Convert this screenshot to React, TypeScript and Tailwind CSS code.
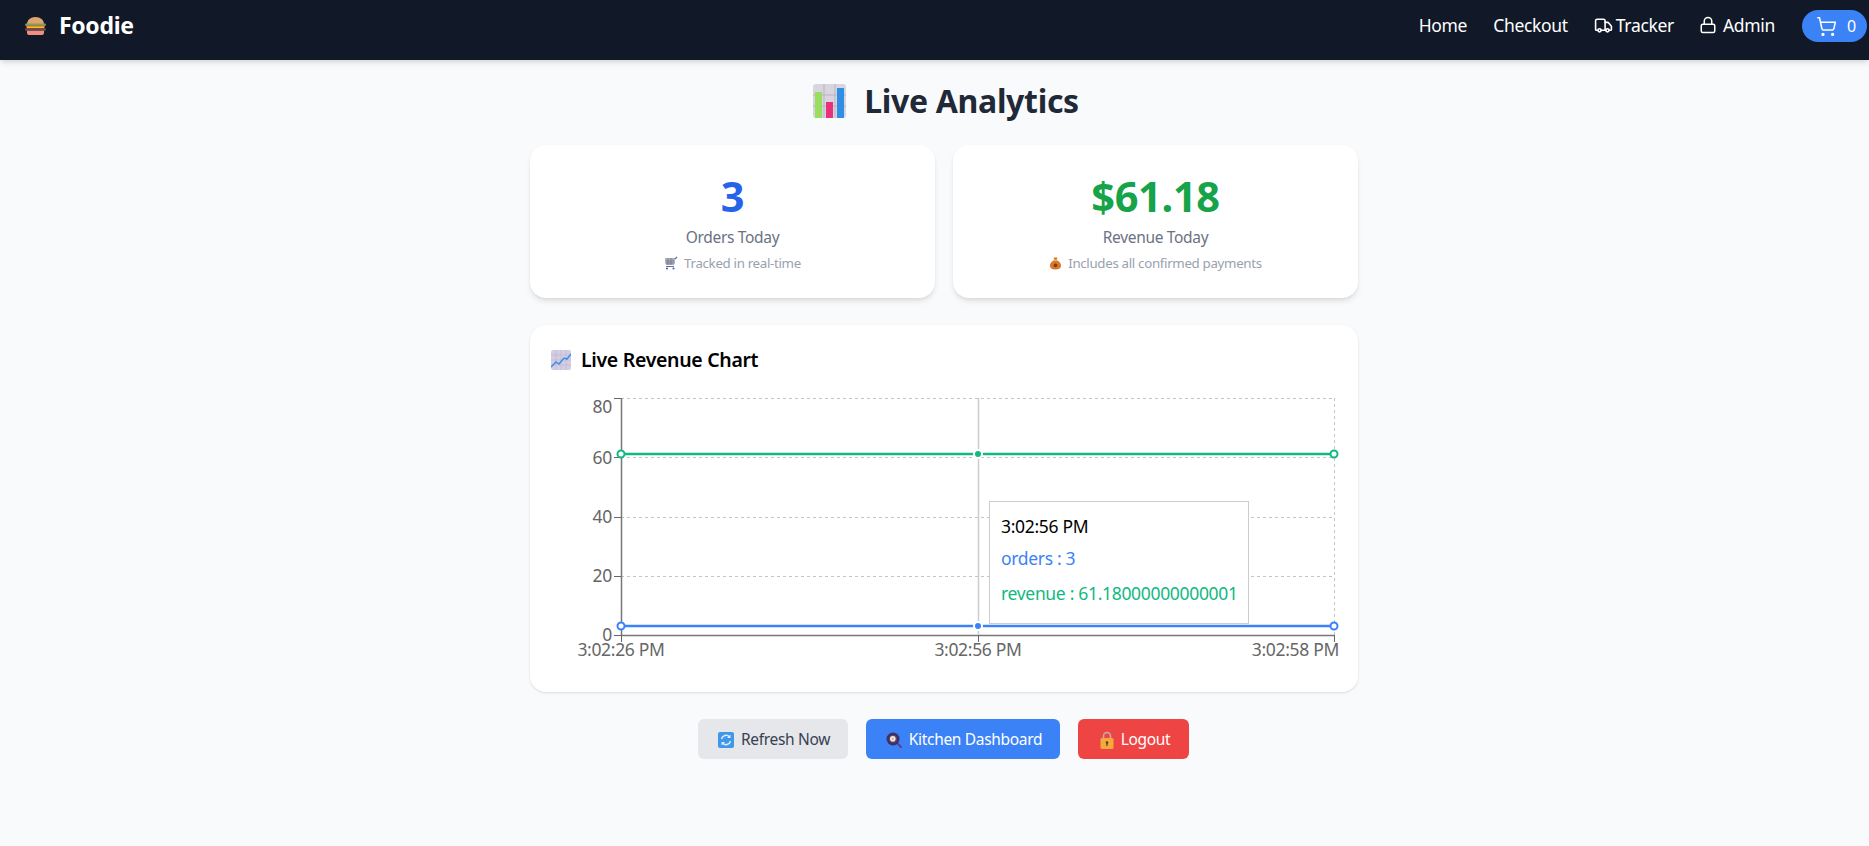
import React from "react";
import { Truck, Lock, ShoppingCart } from "lucide-react";

const BurgerIcon = ({ className }: { className?: string }) => (
  <svg viewBox="0 0 24 20" className={className}>
    <path d="M3 9C3 4 7 1 12 1s9 3 9 8z" fill="#e0a56f" />
    <rect x="1" y="8" width="22" height="2.4" rx="1.2" fill="#6ea860" />
    <rect x="2" y="10" width="20" height="2" fill="#e8483f" />
    <rect x="3" y="11" width="18" height="1.8" fill="#f5c518" />
    <rect x="1" y="12.6" width="22" height="3" rx="1.5" fill="#6d4c4c" />
    <path d="M3 15.5h18v1.5a3 3 0 0 1-3 3H6a3 3 0 0 1-3-3z" fill="#ee8f80" />
  </svg>
);

const BarsIcon = ({ className }: { className?: string }) => (
  <svg viewBox="0 0 33 34" className={className}>
    <rect width="33" height="34" rx="3" fill="#d9d5df" />
    <path d="M11 0v34M22 0v34M0 11h33M0 22h33" stroke="#b9b4c0" strokeWidth="1" />
    <rect x="2" y="8" width="7" height="26" fill="#9ade5f" />
    <rect x="13" y="18" width="7" height="16" fill="#e8317a" />
    <rect x="24" y="4" width="7" height="30" fill="#2f8fe6" />
  </svg>
);

const CartEmoji = ({ className }: { className?: string }) => (
  <svg viewBox="0 0 14 14" className={className}>
    <path d="M1 2h10l-1 7H2z" fill="#a9abb5" />
    <path d="M1 5h10M1 7h10M4 2v7M7 2v7" stroke="#74778a" strokeWidth=".7" />
    <path d="M11 3l2-2M2 10.500h8" stroke="#5d6fb0" strokeWidth="1.200" />
    <circle cx="3" cy="12.500" r="1.100" fill="#4a69bd" />
    <circle cx="9.500" cy="12.500" r="1.100" fill="#4a69bd" />
  </svg>
);

const BagEmoji = ({ className }: { className?: string }) => (
  <svg viewBox="0 0 14 14" className={className}>
    <path d="M5 1h4L8.300 4c3 1 4.700 3.500 4.700 6 0 2.500-2 4-6 4s-6-1.500-6-4c0-2.500 1.700-5 4.700-6z" fill="#d9772b" />
    <rect x="5" y="3.400" width="4" height="1.200" fill="#f6c453" />
    <circle cx="7" cy="9.500" r="2" fill="#7a3d12" />
  </svg>
);

const TrendEmoji = ({ className }: { className?: string }) => (
  <svg viewBox="0 0 20 20" className={className}>
    <rect width="20" height="20" rx="2" fill="#d5cde4" />
    <path d="M5 0v20M10 0v20M15 0v20M0 5h20M0 10h20M0 15h20" stroke="#bdb3d1" strokeWidth=".6" />
    <path d="M0 17l5-5 3 2 5-6 3 1 4-5" fill="none" stroke="#3b8fe0" strokeWidth="1.500" />
  </svg>
);

const RefreshEmoji = ({ className }: { className?: string }) => (
  <svg viewBox="0 0 16 16" className={className}>
    <rect width="16" height="16" rx="2" fill="#3f97ea" />
    <path d="M3.500 7a4.600 4.600 0 0 1 8-2M12.500 9a4.600 4.600 0 0 1-8 2" fill="none" stroke="#dcecfb" strokeWidth="1.500" />
    <path d="M12.500 2.500v3.500H9M3.500 13.500V10H7" fill="#dcecfb" />
  </svg>
);

const PanEmoji = ({ className }: { className?: string }) => (
  <svg viewBox="0 0 16 16" className={className}>
    <path d="M11 11l4 4" stroke="#5b3f8f" strokeWidth="2" strokeLinecap="round" />
    <circle cx="7" cy="7" r="6.500" fill="#3f2f63" />
    <circle cx="7" cy="7" r="4" fill="#5a4786" />
    <circle cx="6.800" cy="6.800" r="2.800" fill="#f4efe6" />
    <circle cx="6.800" cy="6.800" r="1.200" fill="#f3b03d" />
  </svg>
);

const LockEmoji = ({ className }: { className?: string }) => (
  <svg viewBox="0 0 14 18" className={className}>
    <path d="M3.500 8V5a3.500 3.500 0 0 1 7 0v3" fill="none" stroke="#b9b3ad" strokeWidth="1.600" />
    <rect x="0.500" y="7" width="13" height="11" rx="1.500" fill="#f4a93c" />
    <circle cx="7" cy="11.500" r="1.300" fill="#5c3b16" />
    <rect x="6.400" y="12" width="1.200" height="3" fill="#5c3b16" />
  </svg>
);

const StatCard = ({ value, valueClass, label, note, icon }: { value: string; valueClass: string; label: string; note: string; icon: React.ReactNode }) => (
  <div className="bg-white rounded-2xl shadow-md h-[153px] flex flex-col items-center pt-[26px]">
    <div className={`text-[41.5px] leading-[50px] font-bold ${valueClass}`}>{value}</div>
    <div className="text-[15.5px] leading-[24px] text-gray-500 mt-[4px]">{label}</div>
    <div className="text-[13.3px] leading-[16px] text-gray-400 mt-[6px] flex items-center gap-[6px]">
      {icon}
      {note}
    </div>
  </div>
);

const RevenueChart = () => {
  const yTicks = [
    { y: 398, label: "80", ty: 413 },
    { y: 457, label: "60", ty: 464 },
    { y: 517, label: "40", ty: 523 },
    { y: 576, label: "20", ty: 582 },
    { y: 635, label: "0", ty: 641 },
  ];
  return (
    <svg viewBox="551 390 792 270" className="block w-[792px] h-[270px] -mr-[6px]">
      {yTicks.slice(0, 4).map((t) => (
        <line key={t.label} x1="621" x2="1334" y1={t.y + 0.5} y2={t.y + 0.5} stroke="#c4c4c4" strokeDasharray="3 3" />
      ))}
      <line x1="1334.500" x2="1334.500" y1="398" y2="635" stroke="#c4c4c4" strokeDasharray="3 3" />
      <line x1="621.500" x2="621.500" y1="398" y2="635" stroke="#777" strokeWidth="1.500" />
      <line x1="621" x2="1334" y1="635.500" y2="635.500" stroke="#777" strokeWidth="1.500" />
      <line x1="978.500" x2="978.500" y1="398" y2="635" stroke="#ccc" strokeWidth="1.500" />
      {yTicks.map((t) => (
        <g key={t.label}>
          <line x1="614" x2="621" y1={t.y + 0.5} y2={t.y + 0.5} stroke="#666" />
          <text x="612" y={t.ty} textAnchor="end" fill="#666" fontSize="17.5">{t.label}</text>
        </g>
      ))}
      {[621.5, 978.5, 1334.5].map((x) => (
        <line key={x} x1={x} x2={x} y1="635" y2="642" stroke="#666" />
      ))}
      <text x="621" y="656" textAnchor="middle" fill="#666" fontSize="17.5">3:02:26 PM</text>
      <text x="978" y="656" textAnchor="middle" fill="#666" fontSize="17.5">3:02:56 PM</text>
      <text x="1339" y="656" textAnchor="end" fill="#666" fontSize="17.5">3:02:58 PM</text>

      <line x1="621" x2="1334" y1="454" y2="454" stroke="#10b981" strokeWidth="2.500" />
      <line x1="621" x2="1334" y1="626" y2="626" stroke="#3b82f6" strokeWidth="2.500" />
      {[621, 1334].map((x) => (
        <g key={x} fill="#fff" strokeWidth="2">
          <circle cx={x} cy="454" r="3.500" stroke="#10b981" />
          <circle cx={x} cy="626" r="3.500" stroke="#3b82f6" />
        </g>
      ))}
      <circle cx="978" cy="454" r="4" fill="#10b981" stroke="#fff" strokeWidth="2" />
      <circle cx="978" cy="626" r="4" fill="#3b82f6" stroke="#fff" strokeWidth="2" />
    </svg>
  );
};

export default function App() {
  return (
    <div className="min-h-[846px] bg-[#f9fafb] font-['Noto_Sans',sans-serif] tracking-[-0.02em]">
      <nav className="h-[60px] bg-[#111827] shadow-md flex items-center justify-between pl-[24px] pr-[2px] pb-[8px] text-white">
        <div className="flex items-center gap-[12px] pb-[2px]">
          <BurgerIcon className="w-[23px] h-[19px]" />
          <span className="text-[23px] leading-[32px] font-bold">Foodie</span>
        </div>
        <div className="flex items-center text-[17.5px] leading-[28px]">
          <a className="mr-[26px] pb-[2px]">Home</a>
          <a className="mr-[26px] pb-[2px]">Checkout</a>
          <a className="flex items-center gap-[3px] mr-[25px] pb-[2px]"><Truck size={19} strokeWidth={2} />Tracker</a>
          <a className="flex items-center gap-[6px] mr-[27px] pb-[2px]"><Lock size={18} strokeWidth={2} />Admin</a>
          <button className="w-[65px] h-[32px] rounded-full bg-[#3b82f6] flex items-center pl-[14px] gap-[10px] text-[16px]">
            <ShoppingCart size={21} strokeWidth={1.75} />0
          </button>
        </div>
      </nav>

      <main className="pl-[19px] flex flex-col items-center">
        <h1 className="mt-[23px] ml-[4px] h-[36px] flex items-center gap-[18px] text-[32px] font-bold text-[#1f2937]">
          <BarsIcon className="w-[33px] h-[34px]" />
          Live Analytics
        </h1>

        <div className="w-[828px] mt-[26px] grid grid-cols-2 gap-[18px]">
          <StatCard value="3" valueClass="text-[#2563eb]" label="Orders Today" note="Tracked in real-time" icon={<CartEmoji className="w-[14px] h-[14px]" />} />
          <StatCard value="$61.18" valueClass="text-[#16a34a]" label="Revenue Today" note="Includes all confirmed payments" icon={<BagEmoji className="w-[13px] h-[14px]" />} />
        </div>

        <section className="w-[828px] mt-[27px] bg-white rounded-2xl shadow-sm px-[21px] pt-[21px] pb-[32px]">
          <h2 className="h-[28px] flex items-center gap-[10px] text-[19.5px] font-semibold text-black">
            <TrendEmoji className="w-[20px] h-[20px]" />
            Live Revenue Chart
          </h2>
          <div className="relative mt-[16px]">
            <RevenueChart />
            <div className="absolute left-[438px] top-[111px] w-[260px] h-[123px] bg-white border border-[#ccc] pl-[11px] pt-[10px] text-[17.5px]">
              <p className="leading-[28px] text-black">3:02:56 PM</p>
              <p className="leading-[24px] mt-[6px] text-[#3b82f6]">orders : 3</p>
              <p className="leading-[24px] mt-[11px] text-[#10b981]">revenue : 61.18000000000001</p>
            </div>
          </div>
        </section>

        <div className="mt-[27px] mr-[2px] flex gap-[18px] text-[15.5px]">
          <button className="h-[40px] w-[150px] pt-px pl-[3px] rounded-md bg-[#e5e7eb] text-[#374151] flex items-center justify-center gap-[7px]">
            <RefreshEmoji className="w-[16px] h-[16px]" />Refresh Now
          </button>
          <button className="h-[40px] w-[194px] pt-px pl-[3px] rounded-md bg-[#3b82f6] text-white flex items-center justify-center gap-[7px]">
            <PanEmoji className="w-[16px] h-[16px]" />Kitchen Dashboard
          </button>
          <button className="h-[40px] w-[111px] pt-px pl-[4px] rounded-md bg-[#ef4444] text-white flex items-center justify-center gap-[7px]">
            <LockEmoji className="w-[14px] h-[18px]" />Logout
          </button>
        </div>
      </main>
    </div>
  );
}
